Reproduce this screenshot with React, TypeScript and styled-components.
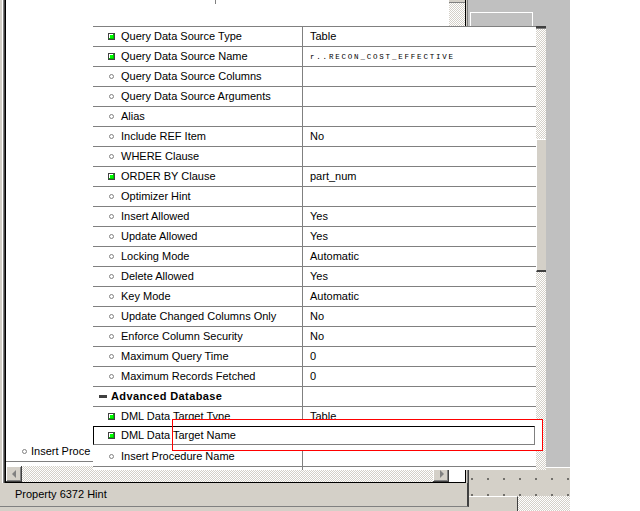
import React from 'react';
import styled, { createGlobalStyle, css } from 'styled-components';

const Global = createGlobalStyle`
  *, *::before, *::after { box-sizing: border-box; }
  html, body { margin: 0; padding: 0; background: #fff; }
  body {
    width: 640px; height: 511px; overflow: hidden;
    font-family: "Liberation Sans", Arial, sans-serif;
    font-size: 11px; line-height: 13px; color: #000;
  }
`;

const checker = css`
  background-color: #fff;
  background-image: repeating-conic-gradient(#d4d0c8 0% 25%, #ffffff 0% 50%);
  background-size: 2px 2px;
`;

const raised = css`
  background: #d4d0c8;
  box-shadow: inset -1px -1px #404040, inset 1px 1px #ffffff,
    inset -2px -2px #808080, inset 2px 2px #d4d0c8;
`;

const Desktop = styled.div`
  position: relative;
  width: 640px;
  height: 511px;
  overflow: hidden;
  background: #fff;
`;

/* ---------- background window ---------- */
const BackWindow = styled.div`
  position: absolute;
  left: 0;
  top: 0;
  width: 469px;
  height: 511px;
  display: flex;
  flex-direction: column;
  background: #d4d0c8;
`;

const BackTop = styled.div`
  display: flex;
  height: 483px;
`;

const EdgeStripes = styled.div`
  width: 5px;
  background: linear-gradient(
    to right,
    #d4d0c8 0 2px,
    #ffffff 2px 3px,
    #808080 3px 4px,
    #404040 4px 5px
  );
`;

const RightEdge = styled.div`
  width: 3px;
  background: linear-gradient(to right, #d4d0c8 0 1px, #808080 1px 2px, #404040 2px 3px);
`;

const ContentFrame = styled.div`
  width: 461px;
  border: 1px solid #000;
  border-top: none;
  display: flex;
  flex-direction: column;
`;

const BackMain = styled.div`
  flex: 1;
  display: flex;
`;

const ListArea = styled.div`
  flex: 1;
  background: #fff;
  display: flex;
  flex-direction: column;
`;

const Spacer = styled.div`
  flex: 1;
`;

const TopStub = styled.div`
  height: 4px;
  width: 210px;
  border-right: 1px solid #808080;
`;

const BgRow = styled.div`
  height: 20px;
  width: 87px;
  border-bottom: 1px solid #808080;
  display: flex;
  align-items: center;
  gap: 3px;
  padding-left: 15px;
  padding-bottom: 1px;
  margin-bottom: 4px;
  white-space: nowrap;
`;

const ClipText = styled.span`
  flex: 1;
  min-width: 0;
  overflow: hidden;
`;

const VScroll = styled.div`
  width: 16px;
  ${checker};
  display: flex;
  flex-direction: column;
`;

const VThumbEnd = styled.div`
  height: 3px;
  background: #d4d0c8;
  border-bottom: 1px solid #808080;
`;

const HScroll = styled.div`
  height: 16px;
  display: flex;
`;

const ArrowBtn = styled.div<{ $dir: 'left' | 'right' }>`
  width: 16px;
  height: 16px;
  ${raised};
  display: flex;
  align-items: center;
  justify-content: center;
  &::after {
    content: '';
    width: 0;
    height: 0;
    border-top: 4px solid transparent;
    border-bottom: 4px solid transparent;
    ${(p) =>
      p.$dir === 'left'
        ? 'border-right: 4px solid #808080; margin-left: -1px;'
        : 'border-left: 4px solid #808080; margin-left: 1px;'}
  }
`;

const Track = styled.div`
  flex: 1;
  ${checker};
`;

const Corner = styled.div`
  width: 16px;
  background: #fff;
`;

const StatusBar = styled.div`
  height: 24px;
  padding-left: 15px;
  display: flex;
  align-items: center;
  border-bottom: 1px solid #808080;
  border-right: 2px solid #404040;
`;

/* ---------- right side panels ---------- */
const SidePanel = styled.div`
  position: absolute;
  left: 468px;
  top: 0;
  width: 102px;
  height: 467px;
  background: #c0c0c0;
`;

const OutlineBox = styled.div`
  margin: 12px 0 0 2px;
  width: 63px;
  height: 40px;
  border: 1px solid #fff;
  border-bottom: none;
`;

const FormCanvas = styled.div`
  position: absolute;
  left: 469px;
  top: 467px;
  width: 101px;
  height: 44px;
  border-top: 1px solid #fff;
  background-color: #d4d0c8;
  background-image: radial-gradient(circle, #000 0.6px, transparent 0.8px);
  background-size: 16px 16px;
  background-position: -5px 3px;
  display: flex;
  flex-direction: column;
  justify-content: flex-end;
`;

const CanvasBottom = styled.div`
  height: 15px;
  display: flex;
`;

const Widget = styled.div`
  width: 49px;
  background: #d4d0c8;
  border-top: 1px solid #fff;
  border-right: 1px solid #404040;
`;

const CanvasChecker = styled.div`
  flex: 1;
  ${checker};
`;

/* ---------- property palette ---------- */
const Palette = styled.div`
  position: absolute;
  left: 93px;
  top: 26px;
  width: 453px;
  height: 444px;
  display: flex;
  background: #fff;
`;

const Grid = styled.div`
  width: 443px;
  border-top: 1px solid #808080;
  display: flex;
  flex-direction: column;
`;

const Row = styled.div<{ $selected?: boolean }>`
  height: 20px;
  display: flex;
  border-bottom: 1px solid #808080;
  white-space: nowrap;
  ${(p) =>
    p.$selected &&
    css`
      position: relative;
      z-index: 3;
      height: 19px;
      width: 442px;
      margin-top: -1px;
      margin-bottom: 2px;
      background: #fff;
      border: 1px solid;
      border-color: #000 #808080 #808080 #000;
    `}
`;

const NameCell = styled.div<{ $group?: boolean; $selected?: boolean }>`
  width: ${(p) => (p.$selected ? 209 : 210)}px;
  border-right: 1px solid ${(p) => (p.$selected ? 'transparent' : '#808080')};
  display: flex;
  align-items: center;
  padding-left: ${(p) => (p.$group ? 6 : p.$selected ? 14 : 15)}px;
  padding-bottom: 1px;
  gap: ${(p) => (p.$group ? 4 : 6)}px;
  font-weight: ${(p) => (p.$group ? 700 : 400)};
  letter-spacing: ${(p) => (p.$group ? '0.4px' : '0')};
  overflow: hidden;
`;

const ValueCell = styled.div`
  flex: 1;
  display: flex;
  align-items: center;
  padding-left: 7px;
  padding-bottom: 1px;
  overflow: hidden;
`;

const SmallCaps = styled.span`
  font-family: "Liberation Mono", "Courier New", monospace;
  font-size: 7.5px;
  line-height: 8px;
  letter-spacing: 1.8px;
  margin-top: 2px;
`;

const Tail = styled.div`
  flex: 1;
  display: flex;
`;

const TailLeft = styled.div`
  width: 210px;
  border-right: 1px solid #808080;
`;

const PaletteScroll = styled.div`
  width: 10px;
  ${checker};
  display: flex;
  flex-direction: column;
`;

const ScrollTopEdge = styled.div`
  height: 3px;
  background: #404040;
  border-bottom: 1px solid #808080;
`;

const Thumb = styled.div`
  margin-top: 110px;
  height: 133px;
  background: #d4d0c8;
  border-left: 1px solid #fff;
  border-top: 1px solid #fff;
  border-bottom: 2px solid #404040;
`;

const Minus = styled.span`
  display: inline-block;
  width: 8px;
  height: 3px;
  background: #404040;
`;

const IconBox = styled.span`
  display: inline-flex;
  flex: none;
  width: 7px;
  height: 7px;
  align-items: center;
  justify-content: center;
`;

const RedFill = styled.div`
  position: absolute;
  left: 172px;
  top: 419px;
  width: 371px;
  height: 32px;
  background: #fff;
  z-index: 2;
`;

const RedOutline = styled.div`
  position: absolute;
  left: 172px;
  top: 419px;
  width: 371px;
  height: 32px;
  border: 1px solid #ff0000;
  z-index: 4;
`;

const ReqIcon = () => (
  <IconBox>
    <svg width="7" height="7" viewBox="0 0 7 7">
      <rect x="0" y="0" width="7" height="7" fill="#404040" />
      <rect x="1" y="1" width="5" height="5" fill="#00c000" />
      <rect x="1" y="1" width="4" height="1" fill="#ffffff" />
      <rect x="1" y="1" width="1" height="4" fill="#ffffff" />
      <rect x="2" y="2" width="3" height="3" fill="#00ff00" />
    </svg>
  </IconBox>
);

const OptIcon = () => (
  <IconBox>
    <svg width="5" height="5" viewBox="0 0 5 5">
      <circle cx="2.5" cy="2.5" r="2" fill="#fff" stroke="#808080" strokeWidth="1" />
    </svg>
  </IconBox>
);

type Kind = 'req' | 'opt' | 'group';
interface Prop {
  k: Kind;
  n: string;
  v?: string;
  small?: boolean;
  selected?: boolean;
}

const rows: Prop[] = [
  { k: 'req', n: 'Query Data Source Type', v: 'Table' },
  { k: 'req', n: 'Query Data Source Name', v: 'r..RECON_COST_EFFECTIVE', small: true },
  { k: 'opt', n: 'Query Data Source Columns' },
  { k: 'opt', n: 'Query Data Source Arguments' },
  { k: 'opt', n: 'Alias' },
  { k: 'opt', n: 'Include REF Item', v: 'No' },
  { k: 'opt', n: 'WHERE Clause' },
  { k: 'req', n: 'ORDER BY Clause', v: 'part_num' },
  { k: 'opt', n: 'Optimizer Hint' },
  { k: 'opt', n: 'Insert Allowed', v: 'Yes' },
  { k: 'opt', n: 'Update Allowed', v: 'Yes' },
  { k: 'opt', n: 'Locking Mode', v: 'Automatic' },
  { k: 'opt', n: 'Delete Allowed', v: 'Yes' },
  { k: 'opt', n: 'Key Mode', v: 'Automatic' },
  { k: 'opt', n: 'Update Changed Columns Only', v: 'No' },
  { k: 'opt', n: 'Enforce Column Security', v: 'No' },
  { k: 'opt', n: 'Maximum Query Time', v: '0' },
  { k: 'opt', n: 'Maximum Records Fetched', v: '0' },
  { k: 'group', n: 'Advanced Database' },
  { k: 'req', n: 'DML Data Target Type', v: 'Table' },
  { k: 'req', n: 'DML Data Target Name', selected: true },
  { k: 'opt', n: 'Insert Procedure Name' },
];

export default function App() {
  return (
    <>
      <Global />
      <Desktop>
        <BackWindow>
          <BackTop>
            <EdgeStripes />
            <ContentFrame>
              <BackMain>
                <ListArea>
                  <TopStub />
                  <Spacer />
                  <BgRow>
                    <OptIcon />
                    <ClipText>Insert Proce</ClipText>
                  </BgRow>
                </ListArea>
                <VScroll>
                  <VThumbEnd />
                </VScroll>
              </BackMain>
              <HScroll>
                <ArrowBtn $dir="left" />
                <Track />
                <ArrowBtn $dir="right" />
                <Corner />
              </HScroll>
            </ContentFrame>
            <RightEdge />
          </BackTop>
          <StatusBar>Property 6372 Hint</StatusBar>
        </BackWindow>

        <SidePanel>
          <OutlineBox />
        </SidePanel>

        <FormCanvas>
          <CanvasBottom>
            <Widget />
            <CanvasChecker />
          </CanvasBottom>
        </FormCanvas>

        <Palette>
          <Grid>
            {rows.map((r) => (
              <Row key={r.n} $selected={r.selected}>
                <NameCell $group={r.k === 'group'} $selected={r.selected}>
                  {r.k === 'group' ? <Minus /> : r.k === 'req' ? <ReqIcon /> : <OptIcon />}
                  <span>{r.n}</span>
                </NameCell>
                <ValueCell>{r.small ? <SmallCaps>{r.v}</SmallCaps> : r.v}</ValueCell>
              </Row>
            ))}
            <Tail>
              <TailLeft />
            </Tail>
          </Grid>
          <PaletteScroll>
            <ScrollTopEdge />
            <Thumb />
          </PaletteScroll>
        </Palette>

        <RedFill />
        <RedOutline />
      </Desktop>
    </>
  );
}
